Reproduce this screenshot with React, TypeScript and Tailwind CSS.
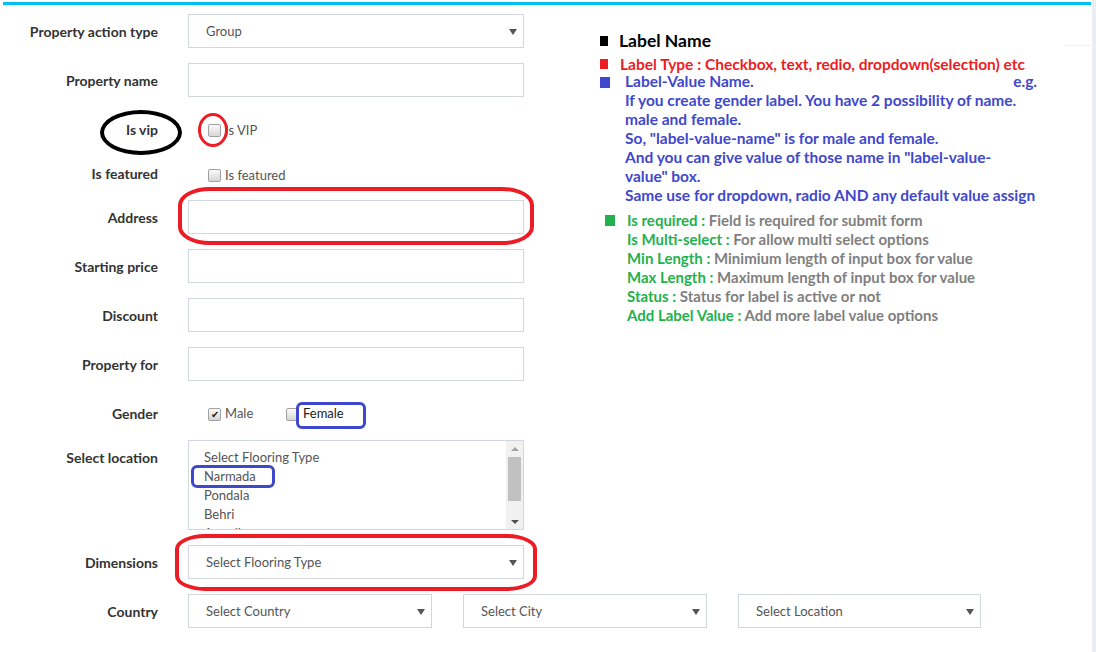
import React from 'react';

const LABEL = 'w-[155px] shrink-0 text-right text-[14px] font-bold text-[#333]';

function Arrow() {
  return <span className="w-0 h-0 border-l-[4px] border-r-[4px] border-t-[6px] border-l-transparent border-r-transparent border-t-[#555]" />;
}

function Select({ text, width = 'w-[336px]' }: { text: string; width?: string }) {
  return (
    <div className={`${width} h-[34px] border border-[#d2d6de] flex items-center justify-between pl-[17px] pr-[6px] pt-px text-[13px] text-[#555]`}>
      <span>{text}</span>
      <Arrow />
    </div>
  );
}

function Input() {
  return <div className="w-[336px] h-[34px] border border-[#d2d6de] bg-white" />;
}

function Check({ checked = false }: { checked?: boolean }) {
  return (
    <span className="w-[13px] h-[13px] shrink-0 rounded-[2px] border border-[#a0a0a0] bg-gradient-to-b from-[#fbfbfb] to-[#d6d6d6] flex items-center justify-center text-[10px] leading-none text-[#222]">
      {checked ? '✔' : ''}
    </span>
  );
}

function Row({ label, children, className = '' }: { label: string; children: React.ReactNode; className?: string }) {
  return (
    <div className={`flex items-center gap-[30px] h-[34px] ${className}`}>
      <div className={LABEL}>{label}</div>
      {children}
    </div>
  );
}

const LOCATIONS = ['Select Flooring Type', 'Narmada', 'Pondala', 'Behri', 'Amreli'];

const GREEN_NOTES = [
  { key: 'Is required', val: 'Field is required for submit form' },
  { key: 'Is Multi-select', val: 'For allow multi select options' },
  { key: 'Min Length', val: 'Minimium length of input box for value' },
  { key: 'Max Length', val: 'Maximum length of input box for value' },
  { key: 'Status', val: 'Status for label is active or not' },
  { key: 'Add Label Value', val: 'Add more label value options' },
];

export default function App() {
  return (
    <div className="relative w-[1096px] h-[652px] overflow-hidden bg-white flex font-['Lato',sans-serif]">
      <div className="w-[1092px] pt-[2px]">
        <div className="ml-[3px] w-[1088px] h-[648px] border-t-[3px] border-[#00c0ef] relative">
          {/* faint header rule at right */}
          <div className="absolute right-0 top-[40px] w-[27px] h-px bg-[#eef0f3]" />

          <div className="flex pt-[9px]">
            {/* Form */}
            <div className="w-[521px] flex flex-col">
              <Row label="Property action type"><Select text="Group" /></Row>
              <Row label="Property name" className="mt-[15px]"><Input /></Row>
              <Row label="Is vip" className="mt-[15px]">
                <div className="flex items-center gap-[4px] pl-[20px] pt-[3px] text-[13px] text-[#555]">
                  <Check /> <span>Is VIP</span>
                </div>
              </Row>
              <Row label="Is featured" className="mt-[10px]">
                <div className="flex items-center gap-[4px] pl-[20px] pt-[5px] text-[13px] text-[#555]">
                  <Check /> <span>Is featured</span>
                </div>
              </Row>
              <Row label="Address" className="mt-[10px]"><Input /></Row>
              <Row label="Starting price" className="mt-[15px]"><Input /></Row>
              <Row label="Discount" className="mt-[15px]"><Input /></Row>
              <Row label="Property for" className="mt-[15px]"><Input /></Row>
              <Row label="Gender" className="mt-[15px]">
                <div className="flex items-center pl-[20px] pt-[2px] text-[13px] text-[#555]">
                  <Check checked /> <span className="ml-[4px] w-[61px]">Male</span>
                  <Check /> <span className="ml-[4px] text-[#222]">Female</span>
                </div>
              </Row>
              <div className="flex items-start gap-[30px] mt-[10px]">
                <div className={`${LABEL} pt-[7px]`}>Select location</div>
                <div className="w-[336px] h-[90px] border border-[#d2d6de] flex overflow-hidden">
                  <div className="flex-1 pt-[7px] pl-[15px] text-[13px] leading-[19px] text-[#555]">
                    {LOCATIONS.map(l => <div key={l}>{l}</div>)}
                  </div>
                  <div className="w-[17px] bg-[#f1f1f1] flex flex-col items-center">
                    <span className="mt-[6px] w-0 h-0 border-l-[4px] border-r-[4px] border-b-[4px] border-l-transparent border-r-transparent border-b-[#a3a3a3]" />
                    <div className="mt-[6px] w-[13px] h-[44px] bg-[#c1c1c1]" />
                    <div className="flex-1" />
                    <span className="mb-[5px] w-0 h-0 border-l-[4px] border-r-[4px] border-t-[4px] border-l-transparent border-r-transparent border-t-[#505050]" />
                  </div>
                </div>
              </div>
              <Row label="Dimensions" className="mt-[15px]"><Select text="Select Flooring Type" /></Row>
            </div>

            {/* Notes */}
            <div className="ml-[76px] pt-[16px] font-bold">
              <div className="flex items-center h-[21px]">
                <span className="w-[8px] h-[10px] bg-black" />
                <span className="ml-[11px] text-[17.5px] leading-[21px] text-black">Label Name</span>
              </div>
              <div className="flex items-center h-[16px] mt-[5px]">
                <span className="w-[8px] h-[10px] bg-[#ed1c24]" />
                <span className="ml-[12px] text-[15.5px] leading-[16px] text-[#ed1c24]">Label Type : Checkbox, text, redio, dropdown(selection) etc</span>
              </div>
              <div className="flex">
                <span className="w-[10px] h-[11px] mt-[5px] bg-[#3f48cc] shrink-0" />
                <div className="ml-[15px] w-[412px] text-[15.5px] leading-[19px] text-[#3f48cc]">
                  <div className="flex justify-between"><span>Label-Value Name.</span><span>e.g.</span></div>
                  <div>If you create gender label. You have 2 possibility of name.</div>
                  <div>male and female.</div>
                  <div>So, "label-value-name" is for male and female.</div>
                  <div>And you can give value of those name in "label-value-</div>
                  <div>value" box.</div>
                  <div className="whitespace-nowrap">Same use for dropdown, radio AND any default value assign</div>
                </div>
              </div>
              <div className="flex mt-[6px] ml-[5px]">
                <span className="w-[10px] h-[11px] mt-[4px] bg-[#22b14c] shrink-0" />
                <div className="ml-[12px] text-[15px] leading-[19px]">
                  {GREEN_NOTES.map(n => (
                    <div key={n.key}>
                      <span className="text-[#22b14c]">{n.key} : </span>
                      <span className="text-[#7f7f7f]">{n.val}</span>
                    </div>
                  ))}
                </div>
              </div>
            </div>
          </div>

          <div className="flex items-center gap-[30px] h-[34px] mt-[15px]">
            <div className={LABEL}>Country</div>
            <div className="flex gap-[31px]">
              <Select text="Select Country" width="w-[244px]" />
              <Select text="Select City" width="w-[244px]" />
              <Select text="Select Location" width="w-[243px]" />
            </div>
          </div>
        </div>
      </div>
      <div className="w-[4px] bg-[#eaedf2]" />

      {/* annotation marks drawn over the form */}
      <div className="absolute left-[100px] top-[110px] w-[82px] h-[45px] rounded-[50%] border-[4px] border-black" />
      <div className="absolute left-[198px] top-[113px] w-[30px] h-[34px] rounded-[50%] border-[3px] border-[#ed1c24]" />
      <div className="absolute left-[178px] top-[187px] w-[356px] h-[58px] rounded-[32px/18px] border-[4px] border-[#ed1c24]" />
      <div className="absolute left-[296px] top-[402px] w-[70px] h-[27px] rounded-[6px] border-[3px] border-[#3f48cc]" />
      <div className="absolute left-[191px] top-[465px] w-[84px] h-[23px] rounded-[6px] border-[3px] border-[#3f48cc]" />
      <div className="absolute left-[175px] top-[534px] w-[362px] h-[57px] rounded-[30px/15px] border-[4px] border-[#ed1c24]" />
    </div>
  );
}
